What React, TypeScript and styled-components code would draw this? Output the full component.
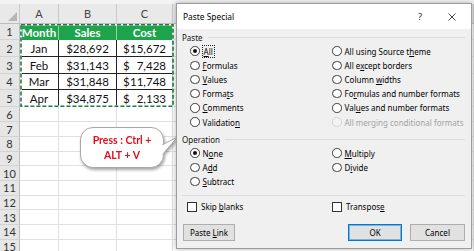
import React from 'react';
import styled, { createGlobalStyle } from 'styled-components';

const GlobalStyle = createGlobalStyle`
  html, body { margin: 0; padding: 0; background: #fff; }
  body { width: 474px; height: 251px; overflow: hidden; }
`;

const Page = styled.div`
  position: relative;
  width: 474px;
  height: 251px;
  overflow: hidden;
  background: #fff;
  font-family: Lato, "Liberation Sans", sans-serif;
`;

/* ---------- spreadsheet ---------- */

const Sheet = styled.div`
  display: flex;
  flex-direction: column;
`;

const Strip = styled.div`
  height: 4px;
  background: #f3f3f3;
`;

const Row = styled.div<{ $h: number }>`
  display: grid;
  grid-template-columns: 20px 39px 58px 56px 1fr;
  height: ${(p) => p.$h}px;
`;

const Corner = styled.div`
  position: relative;
  background: #e9e9e9;
  border-right: 1px solid #c8c8c8;
  border-bottom: 1px solid #bdbdbd;
  svg { position: absolute; right: 2px; bottom: 2px; }
`;

const ColHead = styled.div`
  background: #e9e9e9;
  border-right: 1px solid #c8c8c8;
  border-bottom: 1px solid #bdbdbd;
  display: flex;
  align-items: center;
  justify-content: center;
  font-size: 11px;
  color: #444;
`;

const RowHead = styled.div`
  background: #e6e6e6;
  border-right: 1px solid #bdbdbd;
  border-bottom: 1px solid #d3d3d3;
  display: flex;
  align-items: center;
  justify-content: center;
  font-size: 11px;
  color: #333;
`;

const HeadCell = styled.div`
  background: #1ea44c;
  color: #fff;
  font-weight: 700;
  font-size: 11.5px;
  display: flex;
  align-items: center;
  justify-content: center;
  border-right: 1px solid #8fd3a6;
`;

const DataCell = styled.div<{ $money?: boolean }>`
  display: flex;
  align-items: center;
  justify-content: ${(p) => (p.$money ? 'space-between' : 'center')};
  padding: ${(p) => (p.$money ? '0 6px 0 6px' : '0')};
  font-size: 11.5px;
  color: #111;
  border-right: 1px solid #222;
  border-bottom: 1px solid #222;
`;

const EmptyCell = styled.div`
  border-right: 1px solid #e0e0e0;
  border-bottom: 1px solid #e0e0e0;
`;

const RangeBlock = styled.div`
  position: relative;
`;

const Ants = styled.svg`
  position: absolute;
  left: 20px;
  top: 0;
  width: 154px;
  height: 100%;
  pointer-events: none;
`;

/* ---------- callout ---------- */

const Callout = styled.div`
  position: absolute;
  left: 80px;
  top: 127px;
  width: 84px;
  height: 41px;
  filter: drop-shadow(1px 2px 1.5px rgba(0, 0, 0, 0.35));
`;

const Bubble = styled.div`
  box-sizing: border-box;
  width: 100%;
  height: 100%;
  background: #fff;
  border: 1px solid #a8a8a8;
  border-radius: 13px;
  display: flex;
  flex-direction: column;
  align-items: center;
  justify-content: center;
  color: #e3101b;
  font-weight: 700;
  font-size: 10.5px;
  line-height: 15px;
`;

const Tail = styled.svg`
  position: absolute;
  left: 82px;
  top: 7px;
`;

/* ---------- dialog ---------- */

const Dialog = styled.div`
  position: absolute;
  left: 176px;
  top: 3px;
  width: 296px;
  height: 246px;
  box-sizing: border-box;
  border: 1px solid #9c9c9c;
  background: #f0f0f0;
  box-shadow: 0 0 5px rgba(0, 0, 0, 0.3);
  display: flex;
  flex-direction: column;
  font-family: "Noto Sans", "Open Sans", sans-serif;
  font-size: 8px;
  color: #000;
`;

const TitleBar = styled.div`
  height: 25px;
  background: #fff;
  display: flex;
  align-items: center;
  padding-left: 6px;
  padding-right: 15px;
  font-size: 8.4px;
`;

const Title = styled.span`
  flex: 1;
`;

const Help = styled.span`
  font-size: 9.5px;
  color: #333;
  margin-right: 26px;
`;

const Body = styled.div`
  flex: 1;
  display: flex;
  flex-direction: column;
  padding: 0 6px 0 5px;
`;

const GroupLabel = styled.div<{ $top: number }>`
  display: flex;
  align-items: center;
  height: 14px;
  margin-top: ${(p) => p.$top}px;
  color: #111;
  &::after {
    content: '';
    flex: 1;
    height: 1px;
    margin-left: 5px;
    background: #dcdcdc;
  }
`;

const OptionGrid = styled.div<{ $col: number; $indent: number; $rowH: number; $top?: number }>`
  display: grid;
  grid-template-columns: ${(p) => p.$col}px 1fr;
  grid-auto-rows: ${(p) => p.$rowH}px;
  padding-left: ${(p) => p.$indent}px;
  margin-top: ${(p) => p.$top ?? 0}px;
`;

const Option = styled.div<{ $disabled?: boolean }>`
  display: flex;
  align-items: center;
  gap: 3px;
  white-space: nowrap;
  color: ${(p) => (p.$disabled ? '#a3a3a3' : '#000')};
  u { text-underline-offset: 1px; }
`;

const RadioDot = styled.span<{ $checked?: boolean; $disabled?: boolean }>`
  box-sizing: border-box;
  width: 9.5px;
  height: 9.5px;
  border-radius: 50%;
  border: 1px solid ${(p) => (p.$disabled ? '#d2d2d2' : '#3a3a3a')};
  background: ${(p) => (p.$disabled ? '#f4f4f4' : '#fff')};
  display: flex;
  align-items: center;
  justify-content: center;
  flex-shrink: 0;
  &::after {
    content: '';
    display: ${(p) => (p.$checked ? 'block' : 'none')};
    width: 4.5px;
    height: 4.5px;
    border-radius: 50%;
    background: #111;
  }
`;

const Box = styled.span`
  box-sizing: border-box;
  width: 10px;
  height: 10px;
  border: 1px solid #333;
  background: #fff;
  flex-shrink: 0;
  margin-right: 1px;
`;

const Focus = styled.span`
  outline: 1px dotted #222;
  outline-offset: 0;
  padding: 0 1px;
`;

const Separator = styled.div`
  height: 1px;
  background: #dcdcdc;
  margin-top: 6px;
`;

const Buttons = styled.div`
  display: flex;
  align-items: center;
  margin-top: 10px;
  padding-left: 1px;
  gap: 8px;
`;

const Button = styled.button<{ $w: number; $primary?: boolean }>`
  box-sizing: border-box;
  width: ${(p) => p.$w}px;
  height: 17px;
  padding: 0;
  background: #e1e1e1;
  border: 1px solid ${(p) => (p.$primary ? '#0078d7' : '#adadad')};
  box-shadow: ${(p) => (p.$primary ? 'inset 0 0 0 1px rgba(0,120,215,0.45)' : 'none')};
  font-family: inherit;
  font-size: 8px;
  color: #000;
  u { text-underline-offset: 1px; }
`;

const Spacer = styled.div`
  flex: 1;
`;

type Opt = { label: React.ReactNode; checked?: boolean; disabled?: boolean };

const Radio: React.FC<Opt> = ({ label, checked, disabled }) => (
  <Option $disabled={disabled}>
    <RadioDot $checked={checked} $disabled={disabled} />
    <span>{label}</span>
  </Option>
);

const data = [
  { m: 'Jan', s: '$28,692', c: '15,672' },
  { m: 'Feb', s: '$31,143', c: '7,428' },
  { m: 'Mar', s: '$31,848', c: '11,748' },
  { m: 'Apr', s: '$34,875', c: '2,133' },
];

const lowerRows = [
  { n: 6, h: 15 },
  { n: 7, h: 15 },
  ...[8, 9, 10, 11, 12, 13, 14, 15].map((n) => ({ n, h: 14.7 })),
];

const pasteLeft: Opt[] = [
  { label: <Focus><u>A</u>ll</Focus>, checked: true },
  { label: <><u>F</u>ormulas</> },
  { label: <><u>V</u>alues</> },
  { label: <>Forma<u>t</u>s</> },
  { label: <><u>C</u>omments</> },
  { label: <>Validatio<u>n</u></> },
];

const pasteRight: Opt[] = [
  { label: <>All using Source t<u>h</u>eme</> },
  { label: <>All e<u>x</u>cept borders</> },
  { label: <>Column <u>w</u>idths</> },
  { label: <>Fo<u>r</u>mulas and number formats</> },
  { label: <>Val<u>u</u>es and number formats</> },
  { label: <>All merging conditional formats</>, disabled: true },
];

export default function App() {
  const pasteOpts: Opt[] = [];
  pasteLeft.forEach((o, i) => pasteOpts.push(o, pasteRight[i]));

  return (
    <Page>
      <GlobalStyle />
      <Sheet>
        <Strip />
        <Row $h={20}>
          <Corner>
            <svg width="9" height="9" viewBox="0 0 9 9">
              <polygon points="9,0 9,9 0,9" fill="#b5b5b5" />
            </svg>
          </Corner>
          <ColHead>A</ColHead>
          <ColHead>B</ColHead>
          <ColHead>C</ColHead>
          <ColHead />
        </Row>
        <RangeBlock>
          <Row $h={16}>
            <RowHead>1</RowHead>
            <HeadCell>Month</HeadCell>
            <HeadCell>Sales</HeadCell>
            <HeadCell>Cost</HeadCell>
            <EmptyCell />
          </Row>
          {data.map((d, i) => (
            <Row key={d.m} $h={i === 2 ? 16 : 17}>
              <RowHead>{i + 2}</RowHead>
              <DataCell>{d.m}</DataCell>
              <DataCell>{d.s}</DataCell>
              <DataCell $money>
                <span>$</span>
                <span>{d.c}</span>
              </DataCell>
              <EmptyCell />
            </Row>
          ))}
          <Ants preserveAspectRatio="none">
            <rect
              x="1"
              y="0.8"
              width="152"
              height="81.4"
              fill="none"
              stroke="#fff"
              strokeWidth="1.6"
            />
            <rect
              x="1"
              y="0.8"
              width="152"
              height="81.4"
              fill="none"
              stroke="#217a45"
              strokeWidth="1.6"
              strokeDasharray="4 2"
            />
          </Ants>
        </RangeBlock>
        {lowerRows.map((r) => (
          <Row key={r.n} $h={r.h}>
            <RowHead>{r.n}</RowHead>
            <EmptyCell />
            <EmptyCell />
            <EmptyCell />
            <EmptyCell />
          </Row>
        ))}
      </Sheet>

      <Callout>
        <Bubble>
          <span>Press : Ctrl +</span>
          <span>ALT + V</span>
        </Bubble>
        <Tail width="18" height="24" viewBox="0 0 18 24">
          <polygon points="0,11 15.5,3 0,21" fill="#fff" />
          <polyline points="0,11 15.5,3 0,21" fill="none" stroke="#a8a8a8" strokeWidth="1" />
          <rect x="0" y="11.5" width="1.2" height="9" fill="#fff" />
        </Tail>
      </Callout>

      <Dialog>
        <TitleBar>
          <Title>Paste Special</Title>
          <Help>?</Help>
          <svg width="8" height="8" viewBox="0 0 8 8">
            <path d="M0.5 0.5 L7.5 7.5 M7.5 0.5 L0.5 7.5" stroke="#333" strokeWidth="0.9" />
          </svg>
        </TitleBar>
        <Body>
          <GroupLabel $top={1}>Paste</GroupLabel>
          <OptionGrid $col={142} $indent={8} $rowH={14.2}>
            {pasteOpts.map((o, i) => (
              <Radio key={i} {...o} />
            ))}
          </OptionGrid>
          <GroupLabel $top={3}>Operation</GroupLabel>
          <OptionGrid $col={142} $indent={8} $rowH={14.2}>
            <Radio label={<>N<u>o</u>ne</>} checked />
            <Radio label={<><u>M</u>ultiply</>} />
            <Radio label={<>A<u>d</u>d</>} />
            <Radio label={<>D<u>i</u>vide</>} />
            <Radio label={<><u>S</u>ubtract</>} />
          </OptionGrid>
          <Separator />
          <OptionGrid $col={145} $indent={5} $rowH={14} $top={4}>
            <Option>
              <Box />
              <span>Skip <u>b</u>lanks</span>
            </Option>
            <Option>
              <Box />
              <span>Transpos<u>e</u></span>
            </Option>
          </OptionGrid>
          <Buttons>
            <Button $w={52}>Paste <u>L</u>ink</Button>
            <Spacer />
            <Button $w={54} $primary>OK</Button>
            <Button $w={55}>Cancel</Button>
          </Buttons>
        </Body>
      </Dialog>
    </Page>
  );
}
